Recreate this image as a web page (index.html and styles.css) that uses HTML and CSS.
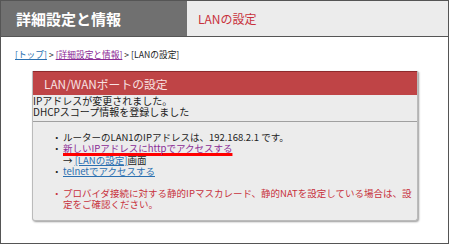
FILE: index.html
```html
<!DOCTYPE html>
<html lang="ja">
<head>
  <meta charset="UTF-8">
  <title>LANの設定</title>
  <link rel="stylesheet" href="styles.css">
</head>
<body>
  <div class="frame">
    <div class="head">
      <div class="head-title">詳細設定と情報</div>
      <div class="head-sub">LANの設定</div>
    </div>

    <p class="crumbs">
      <a href="#" class="link">[トップ]</a> &gt;
      <a href="#" class="visited">[詳細設定と情報]</a> &gt;
      [LANの設定]
    </p>

    <div class="panel">
      <div class="panel-title">LAN/WANポートの設定</div>
      <div class="panel-msg">
        IPアドレスが変更されました。<br>
        DHCPスコープ情報を登録しました
      </div>
      <div class="panel-body">
        <ul class="items">
          <li><span class="dot">・</span><span>ルーターのLAN1のIPアドレスは、192.168.2.1 です。</span></li>
          <li><span class="dot">・</span><span><a href="#" class="visited mark">新しいIPアドレスにhttpでアクセスする</a><br>→ <a href="#" class="link">[LANの設定]</a>画面</span></li>
          <li><span class="dot">・</span><span><a href="#" class="link">telnetでアクセスする</a></span></li>
        </ul>
        <ul class="items warn">
          <li><span class="dot">・</span><span>プロバイダ接続に対する静的IPマスカレード、静的NATを設定している場合は、設<br>定をご確認ください。</span></li>
        </ul>
      </div>
    </div>
  </div>
</body>
</html>
```

FILE: styles.css
```css
*, *::before, *::after {
  box-sizing: border-box;
}

body {
  margin: 0;
  background: #fff;
  color: #222;
  font-family: "Noto Sans CJK JP", "Noto Sans", sans-serif;
}

.frame {
  width: 449px;
  height: 244px;
  border: 1px solid #555;
}

.head {
  display: flex;
  height: 36px;
  border-bottom: 1px solid #555;
}

.head-title {
  width: 186px;
  background: #707070;
  color: #fff;
  font-size: 15px;
  font-weight: bold;
  line-height: 35px;
  padding-left: 15px;
}

.head-sub {
  flex: 1;
  background: #ececec;
  color: #c8323c;
  font-size: 12px;
  line-height: 35px;
  padding-left: 11px;
}

.crumbs {
  margin: 0;
  padding: 12px 14px 0;
  height: 34px;
  font-size: 8.7px;
  line-height: 11px;
}

.link {
  color: #2a6fb0;
}

.visited {
  color: #8a2a95;
}

.mark {
  text-decoration: underline 3px #f00;
  text-decoration-skip-ink: none;
  text-underline-offset: 1px;
}

.panel {
  width: 386px;
  margin-left: 31px;
  background: #ececec;
  border: 1px solid #bbb;
  border-top: 0;
  border-radius: 0 0 3px 3px;
  box-shadow: 1px 1px 2px #999;
}

.panel-title {
  height: 24px;
  background: #bf4446;
  border-top: 1px solid #8e2a2c;
  color: #f8e2e2;
  font-size: 11.8px;
  line-height: 23px;
  padding-left: 11px;
}

.panel-msg {
  padding: 0 0 4px;
  font-size: 10px;
  line-height: 11px;
  border-bottom: 1px solid #a0a0a0;
}

.panel-body {
  padding: 10px 0 10px;
}

.items {
  list-style: none;
  margin: 0;
  padding: 0 0 0 19px;
  font-size: 9.5px;
  line-height: 11.4px;
}

.items li {
  display: flex;
}

.dot {
  width: 11px;
  flex: none;
}

.warn {
  margin-top: 10px;
  color: #c8323c;
}
```
